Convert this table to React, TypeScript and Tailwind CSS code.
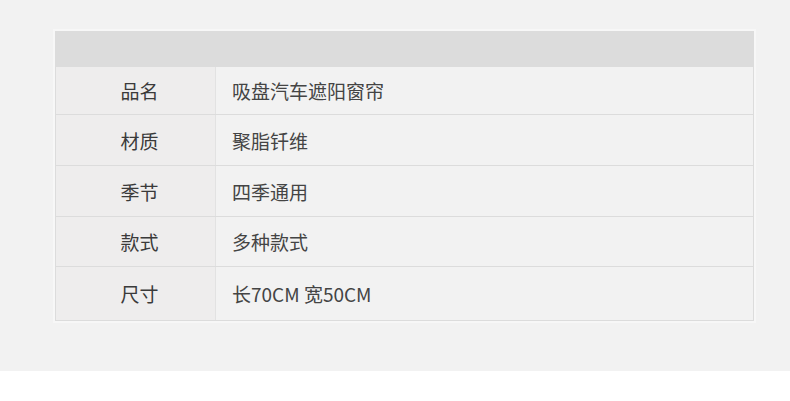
import React from "react";

const rows: { k: string; v: string; h: string }[] = [
  { k: "品名", v: "吸盘汽车遮阳窗帘", h: "h-[48px]" },
  { k: "材质", v: "聚脂钎维", h: "h-[51px]" },
  { k: "季节", v: "四季通用", h: "h-[51px]" },
  { k: "款式", v: "多种款式", h: "h-[50px]" },
  { k: "尺寸", v: "长70CM 宽50CM", h: "h-[53px]" },
];

export default function App() {
  return (
    <div
      className="w-[790px] h-[401px] bg-white"
      style={{ fontFamily: '"Noto Sans CJK SC", "Noto Sans", sans-serif' }}
    >
      <div className="h-[371px] bg-[#f2f2f2] pt-[31px] pl-[55px]">
        <div className="w-[699px] border border-t-0 border-[#dcdcdc] shadow-[0_0_0_2px_#f7f7f7]">
          <div className="h-[36px] bg-[#dcdcdc]" />
          {rows.map((r, i) => (
            <div
              key={i}
              className={`flex ${r.h} ${i < rows.length - 1 ? "border-b border-[#dcdcdc]" : ""}`}
            >
              <div className="w-[160px] border-r border-[#e2e2e2] bg-[#eeeded] flex items-center justify-center pl-[8px] pt-[2px] text-[19px] text-[#3a3a3a]">
                {r.k}
              </div>
              <div className="flex-1 flex items-center pl-[16px] pt-[2px] text-[19px] text-[#444]">
                {r.v}
              </div>
            </div>
          ))}
        </div>
      </div>
    </div>
  );
}
